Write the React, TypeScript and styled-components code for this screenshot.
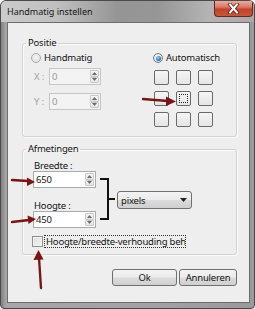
import React from "react";
import styled, { createGlobalStyle, css } from "styled-components";

const GlobalStyle = createGlobalStyle`
  html, body { margin: 0; padding: 0; background: #ffffff; }
  body {
    width: 255px; height: 309px; overflow: hidden;
    font-family: "Noto Sans", "Open Sans", sans-serif;
    color: #141414;
    letter-spacing: -0.2px;
  }
  * { box-sizing: border-box; }
`;

const Window = styled.div`
  position: relative;
  width: 255px;
  height: 309px;
  display: flex;
  flex-direction: column;
  border: 1px solid #4a4a4a;
  border-radius: 6px 6px 4px 4px;
  background: linear-gradient(90deg, #808080 0px, #a6a6a6 5px, #a2a2a2 60%, #9a9a9a 100%);
  overflow: hidden;
`;

const TitleBar = styled.div`
  height: 21px;
  flex: none;
  display: flex;
  align-items: flex-start;
  justify-content: space-between;
  background: linear-gradient(90deg, #cbcbcb 0%, #c0c0c0 22%, #959595 46%, #969696 62%, #b4b4b4 82%, #a9a9a9 100%);
`;

const Title = styled.span`
  margin: 4px 0 0 6px;
  font-size: 9px;
  line-height: 13px;
  letter-spacing: 0;
  color: #151515;
`;

const CloseButton = styled.div`
  width: 39px;
  height: 16px;
  margin-right: 1px;
  border: 1px solid #5e2a22;
  border-top: none;
  border-radius: 0 0 4px 4px;
  background: linear-gradient(180deg, #e9ad9d 0%, #d97a66 40%, #c2412b 55%, #cc5538 100%);
  display: flex;
  align-items: center;
  justify-content: center;
`;

const Client = styled.div`
  flex: 1;
  margin: 0 4px 5px 6px;
  background: #eeeeee;
  border: 1px solid #6c6c6c;
  padding: 13px 12px 0 14px;
  display: flex;
  flex-direction: column;
`;

const Group = styled.fieldset<{ $gapTop?: number }>`
  margin: ${(p) => p.$gapTop ?? 0}px 0 0 0;
  padding: 0;
  min-width: 0;
  border: 1px solid #d2d2d2;
  border-radius: 3px;
  box-shadow: inset 1px 1px 0 #fbfbfb, 1px 1px 0 #fbfbfb;
`;

const Legend = styled.legend`
  margin-left: 3px;
  padding: 0 2px;
  font-size: 9.5px;
  line-height: 14px;
  color: #141414;
`;

const PosBody = styled.div`
  padding: 2px 0 9px 8px;
  display: grid;
  grid-template-columns: 122px auto;
`;

const Column = styled.div`
  display: flex;
  flex-direction: column;
  align-items: flex-start;
`;

const RadioRow = styled.label`
  height: 12px;
  display: flex;
  align-items: center;
  gap: 3px;
  font-size: 9.5px;
  line-height: 12px;
`;

const Radio = styled.span<{ $checked?: boolean; $disabled?: boolean }>`
  position: relative;
  width: 10px;
  height: 10px;
  border-radius: 50%;
  border: 1px solid ${(p) => (p.$disabled ? "#a9a9a9" : "#6f7b8a")};
  background: radial-gradient(circle at 50% 40%, #f4f4f4 0%, #dcdcdc 100%);
  ${(p) =>
    p.$checked &&
    css`
      &::after {
        content: "";
        position: absolute;
        inset: 1.5px;
        border-radius: 50%;
        background: radial-gradient(circle at 40% 35%, #a8d6f8 0%, #3a78b8 55%, #1d4d86 100%);
      }
    `}
`;

const FieldRow = styled.div<{ $top: number }>`
  margin-top: ${(p) => p.$top}px;
  display: flex;
  align-items: center;
`;

const AxisLabel = styled.span`
  width: 18px;
  padding-left: 3px;
  font-size: 9.5px;
  color: #a3a3a3;
`;

const Spin = styled.div<{ $w: number; $disabled?: boolean }>`
  width: ${(p) => p.$w}px;
  height: 17px;
  display: flex;
  border: 1px solid ${(p) => (p.$disabled ? "#c6c6c6" : "#a7acb3")};
  background: ${(p) => (p.$disabled ? "#f3f3f3" : "#ffffff")};
`;

const SpinValue = styled.span<{ $disabled?: boolean }>`
  flex: 1;
  padding-left: 2px;
  font-size: 9.5px;
  line-height: 15px;
  color: ${(p) => (p.$disabled ? "#9a9a9a" : "#141414")};
`;

const SpinButtons = styled.div`
  width: 9px;
  margin: 1px 1px 1px 0;
  display: flex;
  flex-direction: column;
`;

const SpinBtn = styled.span`
  flex: 1;
  border: 1px solid #c9c9c9;
  border-radius: 1px;
  background: linear-gradient(180deg, #f7f7f7, #e4e4e4);
  display: flex;
  align-items: center;
  justify-content: center;
`;

const AnchorGrid = styled.div`
  margin: 6px 0 0 1px;
  display: grid;
  grid-template-columns: repeat(3, 15px);
  grid-auto-rows: 15px;
  column-gap: 7px;
  row-gap: 6px;
`;

const Cell = styled.span<{ $focused?: boolean }>`
  position: relative;
  border: 1px solid #6a6a6a;
  border-radius: 2px;
  background: linear-gradient(180deg, #f5f5f5, #e5e5e5);
  ${(p) =>
    p.$focused &&
    css`
      &::after {
        content: "";
        position: absolute;
        inset: 2px;
        border: 1px dotted #222;
      }
    `}
`;

const DimBody = styled.div`
  padding: 4px 0 6px 10px;
  display: flex;
  flex-direction: column;
`;

const DimRow = styled.div`
  display: flex;
  align-items: flex-start;
`;

const FieldLabel = styled.span<{ $top?: number }>`
  margin-top: ${(p) => p.$top ?? 0}px;
  padding-left: 1px;
  font-size: 9.5px;
  line-height: 11px;
`;

const Bracket = styled.svg`
  margin: 18px 0 0 4px;
  flex: none;
`;

const Select = styled.div`
  margin: 31px 0 0 2px;
  width: 75px;
  height: 18px;
  border: 1px solid #707070;
  border-radius: 3px;
  background: linear-gradient(180deg, #f3f3f3 0%, #ebebeb 48%, #dcdcdc 52%, #cfcfcf 100%);
  display: flex;
  align-items: center;
  justify-content: space-between;
  padding: 0 4px 0 3px;
  font-size: 9.5px;
`;

const CheckRow = styled.label`
  margin: 7px 0 0 -1px;
  height: 13px;
  display: flex;
  align-items: center;
  gap: 1px;
`;

const CheckBox = styled.span`
  width: 11px;
  height: 11px;
  border: 1px solid #8e8f8f;
  background: linear-gradient(135deg, #dcdcdc, #f6f6f6);
  box-shadow: inset 0 0 0 1px #f4f4f4;
`;

const FocusLabel = styled.span`
  width: 142px;
  height: 13px;
  padding: 0 1px;
  border: 1px dotted #333;
  overflow: hidden;
  white-space: nowrap;
  font-size: 9.5px;
  line-height: 11px;
`;

const ButtonRow = styled.div`
  margin-top: 14px;
  display: flex;
  justify-content: flex-end;
  gap: 2px;
`;

const Button = styled.button<{ $w: number }>`
  width: ${(p) => p.$w}px;
  height: 17px;
  padding: 0;
  border: 1px solid #707070;
  border-radius: 3px;
  background: linear-gradient(180deg, #f3f3f3 0%, #ebebeb 48%, #dddddd 52%, #cfcfcf 100%);
  font-family: inherit;
  font-size: 9.5px;
  letter-spacing: -0.2px;
  line-height: 15px;
  color: #141414;
`;

const Overlay = styled.svg`
  position: absolute;
  left: -1px;
  top: -1px;
  pointer-events: none;
`;

const Tri = ({ up }: { up?: boolean }) => (
  <svg width="5" height="3" viewBox="0 0 5 3">
    <path d={up ? "M0 3 L2.5 0 L5 3 Z" : "M0 0 L5 0 L2.5 3 Z"} fill="#6a6a6a" />
  </svg>
);

const SpinBox = ({ w, value, disabled }: { w: number; value: string; disabled?: boolean }) => (
  <Spin $w={w} $disabled={disabled}>
    <SpinValue $disabled={disabled}>{value}</SpinValue>
    <SpinButtons>
      <SpinBtn>
        <Tri up />
      </SpinBtn>
      <SpinBtn>
        <Tri />
      </SpinBtn>
    </SpinButtons>
  </Spin>
);

const ARROW = "#7a1515";

export default function App() {
  return (
    <>
      <GlobalStyle />
      <Window>
        <TitleBar>
          <Title>Handmatig instellen</Title>
          <CloseButton>
            <svg width="13" height="11" viewBox="0 0 13 11">
              <path d="M3 1.5 L10 9.5 M10 1.5 L3 9.5" stroke="#5a1d14" strokeWidth="3.6" strokeLinecap="square" />
              <path d="M3 1.5 L10 9.5 M10 1.5 L3 9.5" stroke="#ffffff" strokeWidth="2" strokeLinecap="square" />
            </svg>
          </CloseButton>
        </TitleBar>
        <Client>
          <Group>
            <Legend>Positie</Legend>
            <PosBody>
              <Column>
                <RadioRow>
                  <Radio $disabled />
                  Handmatig
                </RadioRow>
                <FieldRow $top={4}>
                  <AxisLabel>X :</AxisLabel>
                  <SpinBox w={52} value="0" disabled />
                </FieldRow>
                <FieldRow $top={8}>
                  <AxisLabel>Y :</AxisLabel>
                  <SpinBox w={52} value="0" disabled />
                </FieldRow>
              </Column>
              <Column>
                <RadioRow>
                  <Radio $checked />
                  Automatisch
                </RadioRow>
                <AnchorGrid>
                  {Array.from({ length: 9 }).map((_, i) => (
                    <Cell key={i} $focused={i === 4} />
                  ))}
                </AnchorGrid>
              </Column>
            </PosBody>
          </Group>
          <Group $gapTop={5}>
            <Legend>Afmetingen</Legend>
            <DimBody>
              <DimRow>
                <Column>
                  <FieldLabel>Breedte :</FieldLabel>
                  <SpinBox w={63} value="650" />
                  <FieldLabel $top={12}>Hoogte :</FieldLabel>
                  <SpinBox w={63} value="450" />
                </Column>
                <Bracket width="15" height="42" viewBox="0 0 15 42">
                  <path d="M0 1 H8 V41 H0 M8 21 H15" stroke="#111" strokeWidth="2" fill="none" />
                </Bracket>
                <Select>
                  <span>pixels</span>
                  <svg width="7" height="4" viewBox="0 0 7 4">
                    <path d="M0 0 H7 L3.5 4 Z" fill="#222" />
                  </svg>
                </Select>
              </DimRow>
              <CheckRow>
                <CheckBox />
                <FocusLabel>Hoogte/breedte-verhouding behouden</FocusLabel>
              </CheckRow>
            </DimBody>
          </Group>
          <ButtonRow>
            <Button $w={65}>Ok</Button>
            <Button $w={58}>Annuleren</Button>
          </ButtonRow>
        </Client>
        <Overlay width="255" height="309" viewBox="0 0 255 309">
          <g stroke={ARROW} strokeWidth="2.4" strokeLinecap="round" fill={ARROW}>
            <line x1="143" y1="99" x2="168" y2="101" />
            <line x1="12" y1="180" x2="28" y2="181" />
            <line x1="12" y1="222" x2="29" y2="220" />
            <line x1="41" y1="288" x2="39" y2="258" />
          </g>
          <g fill={ARROW}>
            <polygon points="176,101.5 166,96.5 166,106" />
            <polygon points="35,182 27,177.5 27,186" />
            <polygon points="36,219 27.5,215.5 28.5,224" />
            <polygon points="38.5,250 33.5,260 43.5,259.5" />
          </g>
        </Overlay>
      </Window>
    </>
  );
}
